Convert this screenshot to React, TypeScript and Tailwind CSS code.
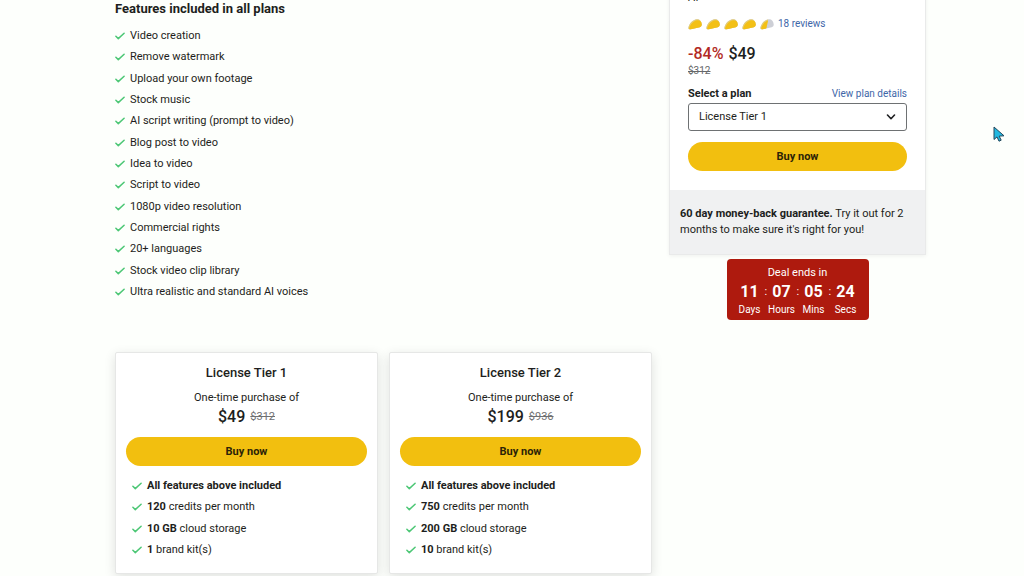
import { useId, useState } from "react";

const features = [
  "Video creation",
  "Remove watermark",
  "Upload your own footage",
  "Stock music",
  "AI script writing (prompt to video)",
  "Blog post to video",
  "Idea to video",
  "Script to video",
  "1080p video resolution",
  "Commercial rights",
  "20+ languages",
  "Stock video clip library",
  "Ultra realistic and standard AI voices",
];

const tiers = [
  { name: "License Tier 1", price: "$49", oldPrice: "$312", credits: "120", storage: "10 GB", kits: "1" },
  { name: "License Tier 2", price: "$199", oldPrice: "$936", credits: "750", storage: "200 GB", kits: "10" },
];

const countdown = [
  { value: "11", label: "Days" },
  { value: "07", label: "Hours" },
  { value: "05", label: "Mins" },
  { value: "24", label: "Secs" },
];

function Check() {
  return (
    <svg viewBox="0 0 10 8" className="h-2 w-[10px] shrink-0" fill="none" stroke="#4cc775" strokeWidth="1.5" strokeLinecap="round" strokeLinejoin="round">
      <path d="M0.9 4.3 3.3 6.6 9.1 1.2" />
    </svg>
  );
}

function Taco({ half = false }: { half?: boolean }) {
  const id = useId();
  return (
    <svg viewBox="0 0 14 12" className="h-3 w-[14px]">
      <defs>
        <clipPath id={id}>
          <path d={half ? "M0 0H8.5L6 12H0Z" : "M0 0H14V12H0Z"} />
        </clipPath>
      </defs>
      <path d="M0.4 9.8C1.2 5.6 4.7 1.5 9 1.2c2.7-.1 4.5 2 4.7 5.1.1 1.4-.5 2.5-2 2.9L2.5 11.3C1.1 11.500.2 10.900.4 9.800Z" fill="#cdcfd6" />
      <g clipPath={`url(#${id})`}>
        <path d="M0.400 9.800C1.200 5.600 4.700 1.500 9 1.200c2.700-.1 4.500 2 4.700 5.100.1 1.400-.5 2.500-2 2.900L2.500 11.300C1.100 11.500.2 10.900.4 9.800Z" fill="#e6cd74" />
        <path d="M1.200 10.300C2.200 6.500 5.300 2.700 9.300 2.300c2.600-.1 4.300 1.400 4.400 3.900 0 1.500-.6 2.600-2 3L3 11.200c-1.200.2-2-.1-1.800-.9Z" fill="#f3c016" />
      </g>
    </svg>
  );
}

function BuyButton() {
  return (
    <button type="button" className="block w-full rounded-full bg-[#f2bf0f] pt-[7px] pb-[6px] text-[11px] leading-4 font-bold text-[#2b2308] hover:bg-[#e5b308]">
      Buy now
    </button>
  );
}

function TierCard({ tier }: { tier: (typeof tiers)[number] }) {
  return (
    <article className="flex-1 rounded-xs border border-[#e6e7e6] bg-white px-[10px] pt-3 pb-[15px] shadow-[0_3px_12px_rgba(0,0,0,0.12)]">
      <h3 className="text-center text-[13px] leading-4 font-medium">{tier.name}</h3>
      <p className="mt-[9px] text-center text-[11px] leading-4">One-time purchase of</p>
      <p className="mt-px flex items-center justify-center gap-[5px] leading-5">
        <span className="text-[16px] font-medium">{tier.price}</span>
        <s className="text-[11px] text-[#6f7072]">{tier.oldPrice}</s>
      </p>
      <div className="mt-[10px]">
        <BuyButton />
      </div>
      <ul className="mt-3 flex min-h-20 flex-col justify-between pl-[6px] text-[11px] leading-4">
        <li className="flex items-center gap-[5px]">
          <Check />
          <b>All features above included</b>
        </li>
        <li className="flex items-center gap-[5px]">
          <Check />
          <span><b>{tier.credits}</b> credits per month</span>
        </li>
        <li className="flex items-center gap-[5px]">
          <Check />
          <span><b>{tier.storage}</b> cloud storage</span>
        </li>
        <li className="flex items-center gap-[5px]">
          <Check />
          <span><b>{tier.kits}</b> brand kit(s)</span>
        </li>
      </ul>
    </article>
  );
}

function PurchasePanel() {
  const [plan, setPlan] = useState<string>("License Tier 1");

  return (
    <aside className="w-[257px] shrink-0">
      <div className="border border-t-0 border-[#e9eaea] bg-white shadow-[0_1px_4px_rgba(0,0,0,0.06)]">
        <div className="px-[18px] pb-[19px]">
          <p className="-mt-[10px] text-[11px] leading-4">Af</p>
          <div className="mt-[10px] flex items-center gap-1">
            <Taco />
            <Taco />
            <Taco />
            <Taco />
            <Taco half />
            <a href="#reviews" className="text-[10px] leading-4 text-[#3e66a8]">18 reviews</a>
          </div>
          <p className="mt-3 flex gap-[5px] text-[16px] leading-5 font-medium">
            <span className="text-[#b22a24]">-84%</span>
            <span>$49</span>
          </p>
          <s className="block text-[10px] leading-[14px] text-[#66686a]">$312</s>
          <div className="mt-2 flex items-center justify-between leading-4">
            <label htmlFor="plan" className="text-[11px] font-bold">Select a plan</label>
            <a href="#plans" className="text-[10px] text-[#3e66a8]">View plan details</a>
          </div>
          <div className="relative mt-px">
            <select
              id="plan"
              value={plan}
              onChange={(e) => setPlan(e.target.value)}
              className="block h-7 w-full appearance-none rounded-[3px] border border-[#6e7173] bg-white px-[10px] text-[11px]"
            >
              {tiers.map((tier) => (
                <option key={tier.name}>{tier.name}</option>
              ))}
            </select>
            <svg viewBox="0 0 10 6" className="pointer-events-none absolute top-1/2 right-[11px] h-[6px] w-[10px] -translate-y-1/2" fill="none" stroke="#1d1e20" strokeWidth="1.6" strokeLinecap="round" strokeLinejoin="round">
              <path d="M1.5 1 5 4.7 8.5 1" />
            </svg>
          </div>
          <div className="mt-[11px]">
            <BuyButton />
          </div>
        </div>
        <p className="bg-[#f0f1f2] px-[10px] py-4 text-[11px] leading-4">
          <b>60 day money-back guarantee.</b> Try it out for 2 months to make sure it's right for you!
        </p>
      </div>
      <div className="mx-auto mt-1 w-[142px] rounded-[4px] bg-[#ae1a0e] pt-[6px] pb-[2px] text-white">
        <p className="text-center text-[11px] leading-4">Deal ends in</p>
        <div className="mt-px flex justify-center">
          {countdown.map((unit, i) => (
            <div key={unit.label} className="relative w-8 text-center">
              {i > 0 && <span className="absolute -left-px text-[11px] leading-5">:</span>}
              <div className="text-[16px] leading-5 font-bold">{unit.value}</div>
              <div className="text-[10px] leading-4">{unit.label}</div>
            </div>
          ))}
        </div>
      </div>
    </aside>
  );
}

function App() {
  return (
    <div className="relative min-h-screen overflow-hidden bg-[#fdfffc] font-['Roboto','Liberation_Sans',sans-serif] text-[#1d1e20]">
      <main className="flex items-start gap-[17px] pr-[98px] pl-[115px]">
        <div className="min-w-0 flex-1">
          <section className="pt-px">
            <h2 className="text-[13px] leading-4 font-bold">Features included in all plans</h2>
            <ul className="mt-[11px] flex min-h-68 flex-col justify-between text-[11px] leading-4">
              {features.map((feature) => (
                <li key={feature} className="flex items-center gap-[5px]">
                  <Check />
                  {feature}
                </li>
              ))}
            </ul>
          </section>
          <section id="plans" className="mt-[52px] flex gap-[11px]">
            {tiers.map((tier) => (
              <TierCard key={tier.name} tier={tier} />
            ))}
          </section>
        </div>
        <PurchasePanel />
      </main>
      <svg viewBox="0 0 12 16" className="absolute top-[126px] left-[993px] h-4 w-3" fill="#22b8e0" stroke="#24475c" strokeWidth="1" strokeLinejoin="round">
        <path d="M1 1v12.5l3-2.6 2 4.3 2.2-1-2-4.1 4.8-.3Z" />
      </svg>
    </div>
  );
}

export default App;
